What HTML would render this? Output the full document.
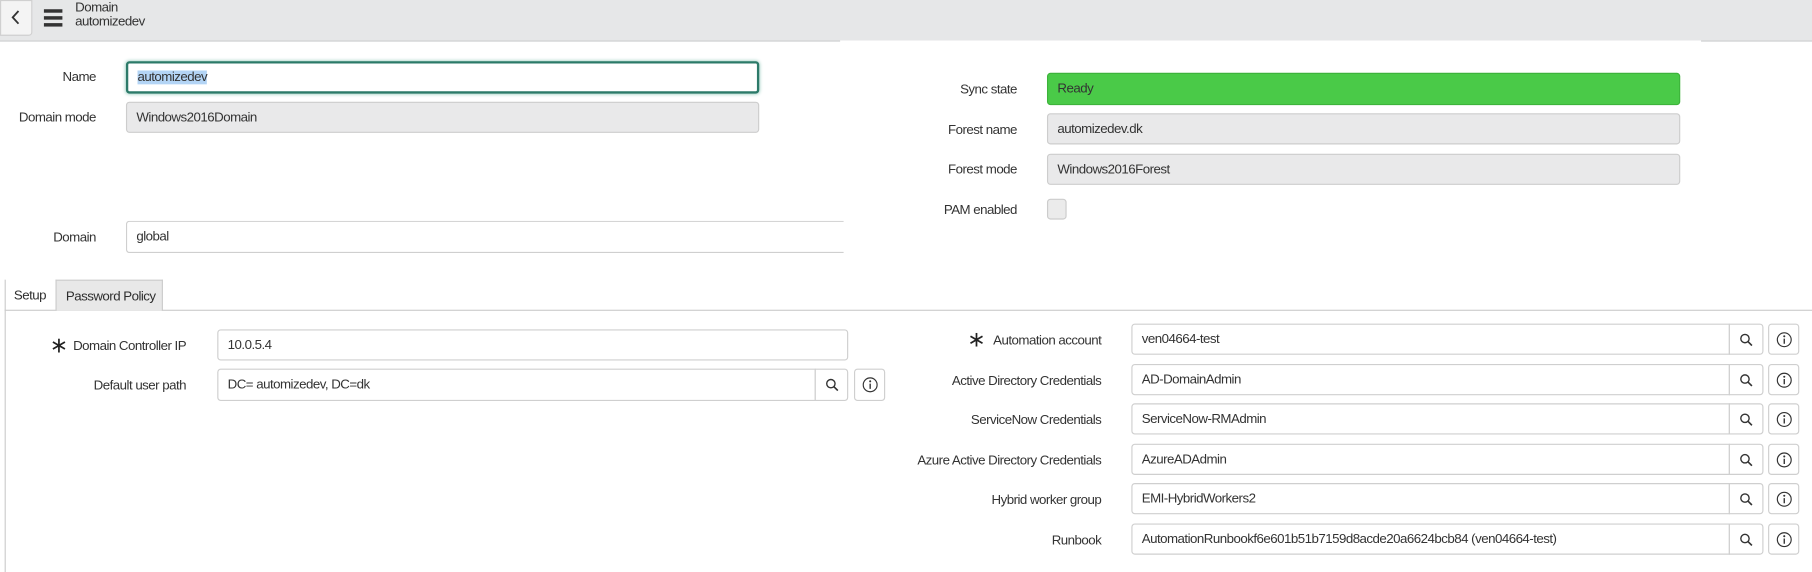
<!DOCTYPE html>
<html><head><meta charset="utf-8"><style>
*{box-sizing:border-box;margin:0;padding:0}
html,body{width:1812px;height:572px;overflow:hidden;background:#fff}
#w{position:absolute;left:0;top:0;width:1568px;height:495px;transform:scale(1.15561);transform-origin:0 0;font-family:"Liberation Sans",sans-serif;font-size:11.5px;letter-spacing:-0.45px;color:#2e2e2e}
.a{position:absolute}
.hdr{left:0;top:0;width:1568px;height:36px;background:#e6e7e8;border-bottom:1px solid #cfd0d1}
.lbl{position:absolute;text-align:right;white-space:nowrap;color:#333;margin-top:2px}
.in{position:absolute;border:1px solid #cfcfcf;border-radius:3px;background:#fff;padding-left:8px;display:flex;align-items:center;color:#333;white-space:nowrap}
.ro{background:#e9e9ea;border-color:#cdcdcd}
.btn{position:absolute;border:1px solid #cfcfcf;background:#fff;display:flex;align-items:center;justify-content:center}
</style></head><body><div id="w">
<div class="a hdr"></div>
<div class="a" style="left:727px;top:35px;width:745px;height:6px;background:#fff"></div>
<div class="a" style="left:0;top:0;width:28px;height:31px;background:#f4f4f4;border:1px solid #d0d0d0;border-radius:0 0 3px 0"></div>
<svg class="a" style="left:8px;top:8px" width="12" height="14"><path d="M8 1.5 L3 7 L8 12.5" stroke="#333" stroke-width="1.6" fill="none"/></svg>
<div class="a" style="left:38px;top:8px;width:16px;height:3px;background:#333"></div>
<div class="a" style="left:38px;top:14px;width:16px;height:3px;background:#333"></div>
<div class="a" style="left:38px;top:20px;width:16px;height:3px;background:#333"></div>
<div class="a" style="left:65px;top:1px;font-size:11.5px;color:#333;line-height:12px">Domain<br>automizedev</div>

<div class="lbl" style="right:1485px;top:59px">Name</div>
<div class="in" style="left:109px;top:53px;width:548px;height:28px;border:2px solid #2c7a69;box-shadow:0 0 3px #8fc7b8"><span style="background:#b3d4f5">automizedev</span></div>
<div class="lbl" style="right:1485px;top:94px">Domain mode</div>
<div class="in ro" style="left:109px;top:88px;width:548px;height:27px">Windows2016Domain</div>
<div class="lbl" style="right:1485px;top:198px">Domain</div>
<div class="in" style="left:109px;top:191px;width:630px;height:28px;border-right:none;border-radius:3px 0 0 3px">global</div>
<div class="a" style="left:730px;top:185px;width:30px;height:40px;background:#fff"></div>

<div class="lbl" style="right:688px;top:70px">Sync state</div>
<div class="in" style="left:906px;top:63px;width:548px;height:28px;background:#4aca48;border-color:#3db33b">Ready</div>
<div class="lbl" style="right:688px;top:105px">Forest name</div>
<div class="in ro" style="left:906px;top:98px;width:548px;height:27px">automizedev.dk</div>
<div class="lbl" style="right:688px;top:139px">Forest mode</div>
<div class="in ro" style="left:906px;top:133px;width:548px;height:27px">Windows2016Forest</div>
<div class="lbl" style="right:688px;top:174px">PAM enabled</div>
<div class="a" style="left:906px;top:172px;width:17px;height:18px;border:1px solid #ccc;border-radius:3px;background:#ebebeb"></div>

<div class="a" style="left:4px;top:242px;width:1px;height:253px;background:#ccc"></div>
<div class="a" style="left:4px;top:268px;width:1564px;height:1px;background:#ccc"></div>
<div class="a" style="left:12px;top:250px">Setup</div>
<div class="a" style="left:48px;top:242px;width:93px;height:27px;background:#e8e8e8;border:1px solid #ccc;border-bottom:none;padding:8px 0 0 8px;white-space:nowrap">Password Policy</div>

<svg class="a" style="left:45px;top:293px" width="12" height="12"><path d="M6 0V12M0.8 3L11.2 9M0.8 9L11.2 3" stroke="#222" stroke-width="1.5"/></svg>
<div class="lbl" style="right:1407px;top:292px">Domain Controller IP</div>
<div class="in" style="left:188px;top:285px;width:546px;height:27px">10.0.5.4</div>
<div class="lbl" style="right:1407px;top:326px">Default user path</div>
<div class="in" style="left:188px;top:319px;width:518px;height:28px;border-radius:3px 0 0 3px">DC= automizedev, DC=dk</div>
<div class="btn" style="left:705px;top:319px;width:29px;height:28px;border-radius:0 3px 3px 0"><svg width="12" height="12"><circle cx="5" cy="5" r="3.6" stroke="#333" stroke-width="1.2" fill="none"/><path d="M7.6 7.6 L11 11" stroke="#333" stroke-width="1.4"/></svg></div>
<div class="btn" style="left:739px;top:319px;width:27px;height:28px;border-radius:3px"><svg width="14" height="14"><circle cx="7" cy="7" r="6" stroke="#333" fill="none"/><circle cx="7" cy="4" r=".9" fill="#333"/><path d="M7 6 V10.5" stroke="#333" stroke-width="1.2"/></svg></div>

<div id="rows"></div>
</div>
<script>
var rows=[["Automation account","ven04664-test",280,1],["Active Directory Credentials","AD-DomainAdmin",315],["ServiceNow Credentials","ServiceNow-RMAdmin",349],["Azure Active Directory Credentials","AzureADAdmin",384],["Hybrid worker group","EMI-HybridWorkers2",418],["Runbook","AutomationRunbookf6e601b51b7159d8acde20a6624bcb84 (ven04664-test)",453]];
var h="";
rows.forEach(function(r){var y=r[2];
if(r[3])h+='<svg class="a" style="left:839px;top:'+(y+8)+'px" width="12" height="12"><path d="M6 0V12M0.8 3L11.2 9M0.8 9L11.2 3" stroke="#222" stroke-width="1.5"/></svg>';
h+='<div class="lbl" style="right:615px;top:'+(y+7)+'px">'+r[0]+'</div>';
h+='<div class="in" style="left:979px;top:'+y+'px;width:518px;height:27px;border-radius:3px 0 0 3px">'+r[1]+'</div>';
h+='<div class="btn" style="left:1496px;top:'+y+'px;width:30px;height:27px;border-radius:0 3px 3px 0"><svg width="12" height="12"><circle cx="5" cy="5" r="3.6" stroke="#333" stroke-width="1.2" fill="none"/><path d="M7.6 7.6 L11 11" stroke="#333" stroke-width="1.4"/></svg></div>';
h+='<div class="btn" style="left:1530px;top:'+y+'px;width:27px;height:27px;border-radius:3px"><svg width="14" height="14"><circle cx="7" cy="7" r="6" stroke="#333" fill="none"/><circle cx="7" cy="4" r=".9" fill="#333"/><path d="M7 6 V10.5" stroke="#333" stroke-width="1.2"/></svg></div>';});
document.getElementById("rows").innerHTML=h;
</script>
</body></html>
